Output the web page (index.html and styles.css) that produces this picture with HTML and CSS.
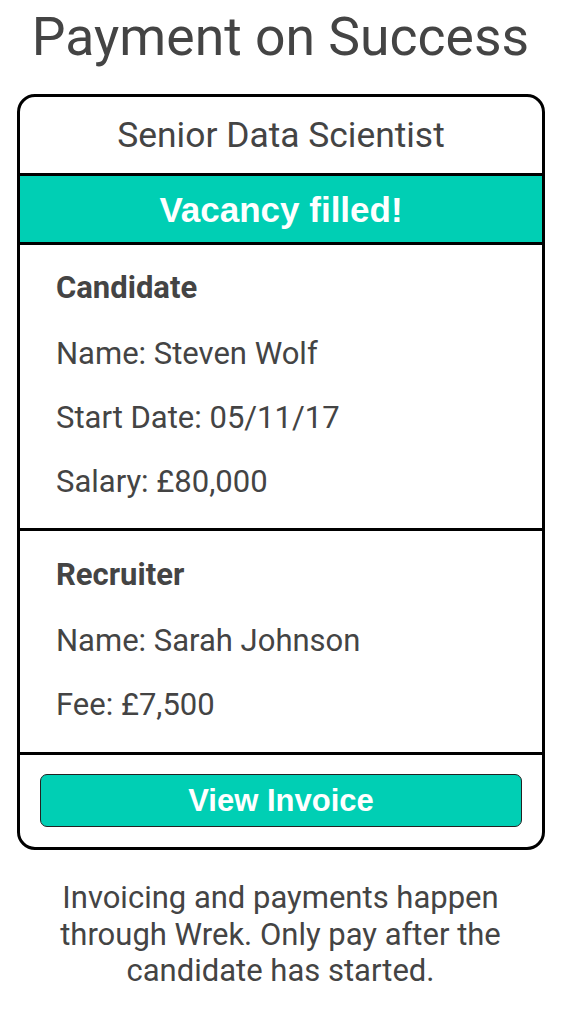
FILE: index.html
```html
<!DOCTYPE html>
<html lang="en">
<head>
<meta charset="utf-8">
<title>Payment on Success</title>
<link rel="stylesheet" href="styles.css">
</head>
<body>
<h1 class="page-title">Payment on Success</h1>
<div class="card">
  <div class="card-head">Senior Data Scientist</div>
  <div class="card-banner">Vacancy filled!</div>
  <div class="card-section">
    <div class="row row-head">Candidate</div>
    <div class="row">Name: Steven Wolf</div>
    <div class="row">Start Date: 05/11/17</div>
    <div class="row">Salary: £80,000</div>
  </div>
  <div class="card-section card-section-2">
    <div class="row row-head">Recruiter</div>
    <div class="row">Name: Sarah Johnson</div>
    <div class="row">Fee: £7,500</div>
  </div>
  <div class="card-foot">
    <button class="btn">View Invoice</button>
  </div>
</div>
<p class="note">Invoicing and payments happen through Wrek. Only pay after the candidate has started.</p>
</body>
</html>
```
FILE: styles.css
```css
* { box-sizing: border-box; }
body {
  margin: 0;
  font-family: Roboto, "Noto Sans", sans-serif;
  color: #444;
  background: #fff;
}
.page-title {
  margin: 11px 0 0;
  font-size: 53.5px;
  line-height: 52px;
  font-weight: 400;
  text-align: center;
}
.card {
  margin: 31px 16px 0 17px;
  border: 3px solid #000;
  border-radius: 18px;
  overflow: hidden;
}
.card-head {
  height: 79px;
  line-height: 76px;
  font-size: 35.4px;
  text-align: center;
  border-bottom: 3px solid #000;
}
.card-banner {
  height: 69px;
  padding-top: 2px;
  line-height: 64px;
  font-family: "Liberation Sans", Arial, sans-serif;
  font-size: 35px;
  font-weight: 700;
  color: #fff;
  text-align: center;
  background: #00cfb4;
  border-bottom: 3px solid #000;
}
.card-section {
  padding: 11px 20px 14px 36px;
  border-bottom: 3px solid #000;
}
.card-section-2 {
  padding: 12px 20px 15px 36px;
}
.row {
  font-size: 31px;
  line-height: 64px;
}
.row-head {
  font-weight: 700;
  margin-bottom: 2px;
}
.card-foot {
  padding: 19px 20px 20px;
}
.btn {
  display: block;
  width: 100%;
  height: 53px;
  padding: 0;
  font-family: "Liberation Sans", Arial, sans-serif;
  font-size: 31px;
  font-weight: 700;
  color: #fff;
  background: #00cfb4;
  border: 1.5px solid #222;
  border-radius: 7px;
}
.note {
  max-width: 470px;
  margin: 30px auto 0;
  font-size: 31px;
  line-height: 36.5px;
  text-align: center;
}
```
